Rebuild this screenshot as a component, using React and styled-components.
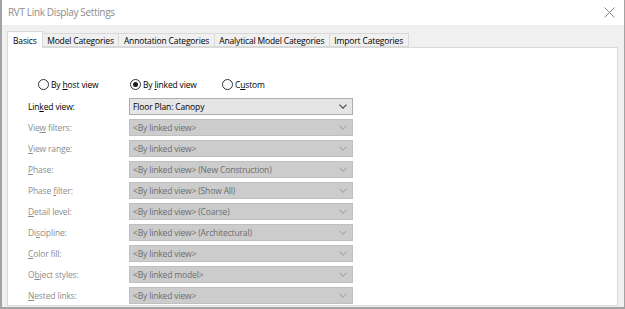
import React from "react";
import styled, { createGlobalStyle } from "styled-components";

const GlobalStyle = createGlobalStyle`
  html, body {
    margin: 0;
    padding: 0;
    background: #f0f0f0;
  }
  body {
    font-family: "Open Sans", "Noto Sans", sans-serif;
    letter-spacing: -0.15px;
  }
`;

const tabs = [
  "Basics",
  "Model Categories",
  "Annotation Categories",
  "Analytical Model Categories",
  "Import Categories",
];

const rows = [
  { label: "Lin", key: "k", rest: "ed view:", value: "Floor Plan: Canopy", enabled: true },
  { label: "Vie", key: "w", rest: " filters:", value: "<By linked view>" },
  { label: "", key: "V", rest: "iew range:", value: "<By linked view>" },
  { label: "", key: "P", rest: "hase:", value: "<By linked view> (New Construction)" },
  { label: "Phase ", key: "f", rest: "ilter:", value: "<By linked view> (Show All)" },
  { label: "", key: "D", rest: "etail level:", value: "<By linked view> (Coarse)" },
  { label: "Di", key: "s", rest: "cipline:", value: "<By linked view> (Architectural)" },
  { label: "", key: "C", rest: "olor fill:", value: "<By linked view>" },
  { label: "O", key: "b", rest: "ject styles:", value: "<By linked model>" },
  { label: "", key: "N", rest: "ested links:", value: "<By linked view>" },
];

function App() {
  return (
    <>
      <GlobalStyle />
      <Window>
        <TitleBar>
          <Title>RVT Link Display Settings</Title>
          <Close>
            <svg width="11" height="11" viewBox="0 0 11 11">
              <path d="M0.5 0.5 L10.5 10.5 M10.5 0.5 L0.5 10.5" stroke="#8a8a8a" strokeWidth="1" />
            </svg>
          </Close>
        </TitleBar>
        <Body>
          <TabStrip>
            {tabs.map((t, i) => (
              <Tab key={t} $active={i === 0}>
                {t}
              </Tab>
            ))}
          </TabStrip>
          <Panel>
            <RadioRow>
              <Radio>
                <Circle />
                <span>
                  By <u>h</u>ost view
                </span>
              </Radio>
              <Radio>
                <Circle $checked />
                <span>
                  By <u>l</u>inked view
                </span>
              </Radio>
              <Radio>
                <Circle />
                <span>
                  C<u>u</u>stom
                </span>
              </Radio>
            </RadioRow>
            <Form>
              {rows.map((r) => (
                <Row key={r.rest}>
                  <Label $enabled={r.enabled}>
                    {r.label}
                    <u>{r.key}</u>
                    {r.rest}
                  </Label>
                  <Select $enabled={r.enabled}>
                    <span>{r.value}</span>
                    <svg width="8" height="5" viewBox="0 0 8 5">
                      <path
                        d="M0.5 0.6 L4 4.1 L7.5 0.6"
                        fill="none"
                        stroke={r.enabled ? "#444" : "#a8a8a8"}
                        strokeWidth="1.1"
                      />
                    </svg>
                  </Select>
                </Row>
              ))}
            </Form>
          </Panel>
        </Body>
      </Window>
    </>
  );
}

const Window = styled.div`
  width: 625px;
  height: 309px;
  box-sizing: border-box;
  display: flex;
  flex-direction: column;
  border-left: 2px solid #a3a3a3;
  border-right: 1px solid #a3a3a3;
  border-bottom: 2px solid #a3a3a3;
  background: #f0f0f0;
  overflow: hidden;
`;

const TitleBar = styled.div`
  height: 25px;
  flex-shrink: 0;
  background: #ffffff;
  display: flex;
  align-items: center;
  justify-content: space-between;
  padding: 0 8px 0 6px;
`;

const Title = styled.div`
  font-size: 10px;
  letter-spacing: -0.35px;
  color: #8e8e8e;
  margin-top: -1px;
`;

const Close = styled.div`
  display: flex;
  align-items: center;
  margin-right: 1px;
`;

const Body = styled.div`
  flex: 1;
  display: flex;
  flex-direction: column;
  padding: 6px 6px 1px 5px;
  min-height: 0;
`;

const TabStrip = styled.div`
  display: flex;
  align-items: flex-end;
  height: 16px;
  position: relative;
  z-index: 1;
`;

const Tab = styled.div`
  font-size: 8.5px;
  color: #000;
  box-sizing: border-box;
  height: ${(p) => (p.$active ? "17px" : "14px")};
  padding: 0 ${(p) => (p.$active ? "5px" : "4.5px")};
  display: flex;
  align-items: center;
  background: ${(p) => (p.$active ? "#ffffff" : "#f0f0f0")};
  border: 1px solid #d9d9d9;
  border-bottom: ${(p) => (p.$active ? "none" : "1px solid #d9d9d9")};
  margin-left: -1px;
  margin-bottom: ${(p) => (p.$active ? "-1px" : "0")};

  &:first-child {
    margin-left: 0;
  }
`;

const Panel = styled.div`
  flex: 1;
  background: #ffffff;
  border: 1px solid #d9d9d9;
  padding: 29px 0 0 20px;
`;

const RadioRow = styled.div`
  display: flex;
  align-items: center;
  height: 14px;
  padding-left: 10px;
  font-size: 8.5px;
  color: #000;
`;

const Radio = styled.div`
  display: flex;
  align-items: center;
  gap: 2px;
  width: 92px;

  u {
    text-decoration-thickness: 1px;
  }
`;

const Circle = styled.span`
  width: 11px;
  height: 11px;
  box-sizing: border-box;
  border-radius: 50%;
  border: 1px solid #333;
  background: #fff;
  display: flex;
  align-items: center;
  justify-content: center;

  &::after {
    content: "";
    display: ${(p) => (p.$checked ? "block" : "none")};
    width: 5px;
    height: 5px;
    border-radius: 50%;
    background: #1a1a1a;
  }
`;

const Form = styled.div`
  display: flex;
  flex-direction: column;
  gap: 4px;
  margin-top: 7px;
`;

const Row = styled.div`
  display: flex;
  align-items: center;
  height: 17px;
`;

const Label = styled.div`
  width: 101px;
  font-size: 8.5px;
  color: ${(p) => (p.$enabled ? "#000" : "#8d8d8d")};
`;

const Select = styled.div`
  width: 224px;
  height: 17px;
  box-sizing: border-box;
  display: flex;
  align-items: center;
  justify-content: space-between;
  padding: 0 5px 0 3px;
  font-size: 8.5px;
  background: ${(p) => (p.$enabled ? "#e5e5e5" : "#cccccc")};
  border: 1px solid ${(p) => (p.$enabled ? "#adadad" : "#bfbfbf")};
  color: ${(p) => (p.$enabled ? "#000" : "#6d6d6d")};
`;

export default App;
